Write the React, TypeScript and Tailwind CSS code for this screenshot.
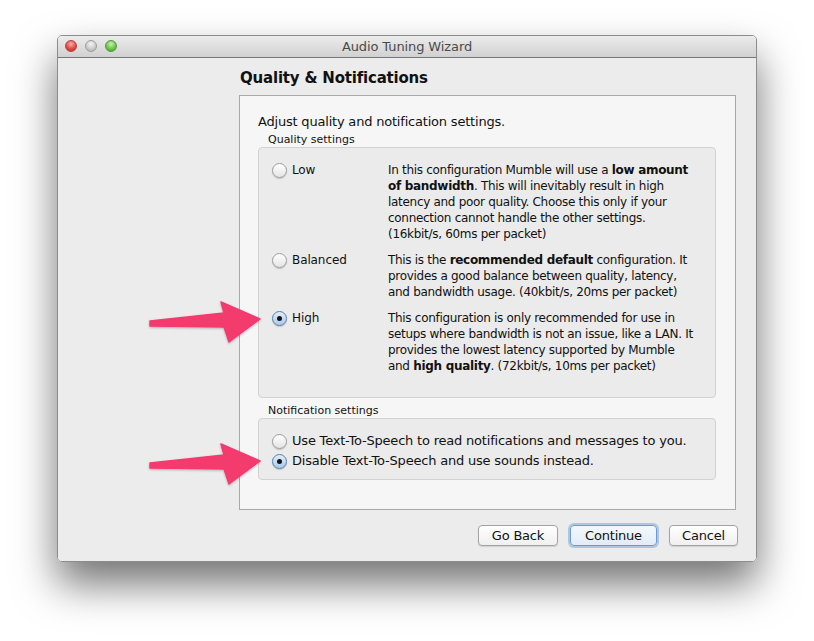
import React from 'react'

const font = { fontFamily: '"DejaVu Sans", "Liberation Sans", sans-serif' }

function Radio({ checked }: { checked?: boolean }) {
  return (
    <span
      className={`inline-flex size-[15px] shrink-0 items-center justify-center rounded-full border shadow-[0_1px_1px_rgba(0,0,0,0.18)] ${
        checked
          ? 'border-[#5b7ea6] bg-gradient-to-b from-[#e3eefa] to-[#a9c9ec]'
          : 'border-[#9c9c9c] bg-gradient-to-b from-white to-[#e4e4e4]'
      }`}
    >
      {checked && <span className="size-[5px] rounded-full bg-[#151515]" />}
    </span>
  )
}

type QualityRow = { label: string; checked?: boolean; lines: React.ReactNode[] }

const QUALITY: QualityRow[] = [
  {
    label: 'Low',
    lines: [
      <>In this configuration Mumble will use a <b>low amount</b></>,
      <><b>of bandwidth</b>. This will inevitably result in high</>,
      <>latency and poor quality. Choose this only if your</>,
      <>connection cannot handle the other settings.</>,
      <>(16kbit/s, 60ms per packet)</>,
    ],
  },
  {
    label: 'Balanced',
    lines: [
      <>This is the <b>recommended default</b> configuration. It</>,
      <>provides a good balance between quality, latency,</>,
      <>and bandwidth usage. (40kbit/s, 20ms per packet)</>,
    ],
  },
  {
    label: 'High',
    checked: true,
    lines: [
      <>This configuration is only recommended for use in</>,
      <>setups where bandwidth is not an issue, like a LAN. It</>,
      <>provides the lowest latency supported by Mumble</>,
      <>and <b>high quality</b>. (72kbit/s, 10ms per packet)</>,
    ],
  },
]

function Arrow({ dy }: { dy: number }) {
  return (
    <g transform={`translate(0 ${dy})`}>
      <polygon
        points="150,321 224,313 221,302 260,319 229,342 224,327 150,326"
        fill="#f43a6e"
        stroke="#f43a6e"
        strokeWidth="1.5"
        strokeLinejoin="round"
      />
    </g>
  )
}

function Button({ children, focused, w }: { children: React.ReactNode; focused?: boolean; w: string }) {
  return (
    <button
      className={`h-[21px] ${w} rounded-[4px] border text-[13px] leading-none tracking-[-0.2px] text-[#111] ${
        focused
          ? 'border-[#6d9bd1] bg-gradient-to-b from-[#f4f8fd] to-[#e2ecf7] shadow-[0_0_0_2px_rgba(120,170,225,0.55)]'
          : 'border-[#a3a3a3] bg-gradient-to-b from-white to-[#f0f0f0] shadow-[0_1px_1px_rgba(0,0,0,0.12)]'
      }`}
    >
      {children}
    </button>
  )
}

export default function App() {
  return (
    <div className="relative h-[641px] w-[814px] overflow-hidden bg-white pl-[57px] pt-[35px] text-[#111]" style={font}>
      <div className="flex h-[527px] w-[700px] flex-col overflow-hidden rounded-[5px] border border-[#8c8c8c] shadow-[0_22px_42px_rgba(0,0,0,0.55)]">
        {/* title bar */}
        <div className="relative flex h-[22px] shrink-0 items-center justify-center border-b border-[#777] bg-gradient-to-b from-[#ececec] to-[#d1d1d1]">
          <div className="absolute left-[7px] top-[4px] flex gap-[8px]">
            <span className="size-[12px] rounded-full border border-[#b0424a] bg-[radial-gradient(circle_at_50%_30%,#ffb0a8,#e0443e_60%,#b8312c)]" />
            <span className="size-[12px] rounded-full border border-[#9c9c9c] bg-[radial-gradient(circle_at_50%_30%,#f4f4f4,#c9c9c9_60%,#a9a9a9)]" />
            <span className="size-[12px] rounded-full border border-[#4d9a3c] bg-[radial-gradient(circle_at_50%_30%,#c8f2a8,#6cc04a_60%,#3f9a2a)]" />
          </div>
          <span className="text-[13px] tracking-[-0.1px] text-[#4a4a4a]">Audio Tuning Wizard</span>
        </div>

        {/* body */}
        <div className="flex flex-1 flex-col bg-[#ececec] pl-[181px] pr-[20px]">
          <h1 className="mt-[10px] h-[20px] pl-px text-[15px] font-bold leading-[20px] tracking-[-0.2px]">Quality &amp; Notifications</h1>

          <div className="mt-[7px] h-[415px] border border-[#a9a9a9] bg-[#f6f6f6] pl-[18px] pr-[19px] pt-[18px] text-[13px] tracking-[-0.2px]">
            <p className="leading-4">Adjust quality and notification settings.</p>

            <p className="mt-[3px] pl-[10px] text-[11px] leading-[14px] tracking-normal">Quality settings</p>
            <div className="flex h-[251px] flex-col gap-[10px] rounded-[4px] border border-[#d2d2d2] bg-[#ebebeb] pl-[13px] pt-[14px] text-[12px] tracking-[-0.1px]">
              {QUALITY.map(row => (
                <div key={row.label} className="flex items-start">
                  <div className="flex h-4 w-[116px] shrink-0 items-center gap-[5px]">
                    <Radio checked={row.checked} />
                    <span className="leading-4">{row.label}</span>
                  </div>
                  <div className="whitespace-nowrap leading-4 tracking-[-0.3px]">
                    {row.lines.map((l, i) => (
                      <div key={i}>{l}</div>
                    ))}
                  </div>
                </div>
              ))}
            </div>

            <p className="mt-[6px] pl-[10px] text-[11px] leading-[14px] tracking-normal">Notification settings</p>
            <div className="h-[62px] rounded-[4px] border border-[#d2d2d2] bg-[#ebebeb] pl-[13px] pt-[12px]">
              <div className="flex h-5 items-center gap-[5px]">
                <Radio />
                <span>Use Text-To-Speech to read notifications and messages to you.</span>
              </div>
              <div className="flex h-5 items-center gap-[5px]">
                <Radio checked />
                <span>Disable Text-To-Speech and use sounds instead.</span>
              </div>
            </div>
          </div>

          <div className="mr-[-2px] mt-[15px] flex justify-end gap-[12px]">
            <Button w="w-[80px]">Go Back</Button>
            <Button w="w-[87px]" focused>Continue</Button>
            <Button w="w-[69px]">Cancel</Button>
          </div>
        </div>
      </div>

      {/* annotation arrows */}
      <svg className="pointer-events-none absolute left-0 top-0" width="814" height="641">
        <defs>
          <filter id="sh" x="-20%" y="-20%" width="140%" height="140%">
            <feDropShadow dx="0" dy="1" stdDeviation="1" floodOpacity="0.25" />
          </filter>
        </defs>
        <g filter="url(#sh)">
          <Arrow dy={0} />
          <Arrow dy={142} />
        </g>
      </svg>
    </div>
  )
}
